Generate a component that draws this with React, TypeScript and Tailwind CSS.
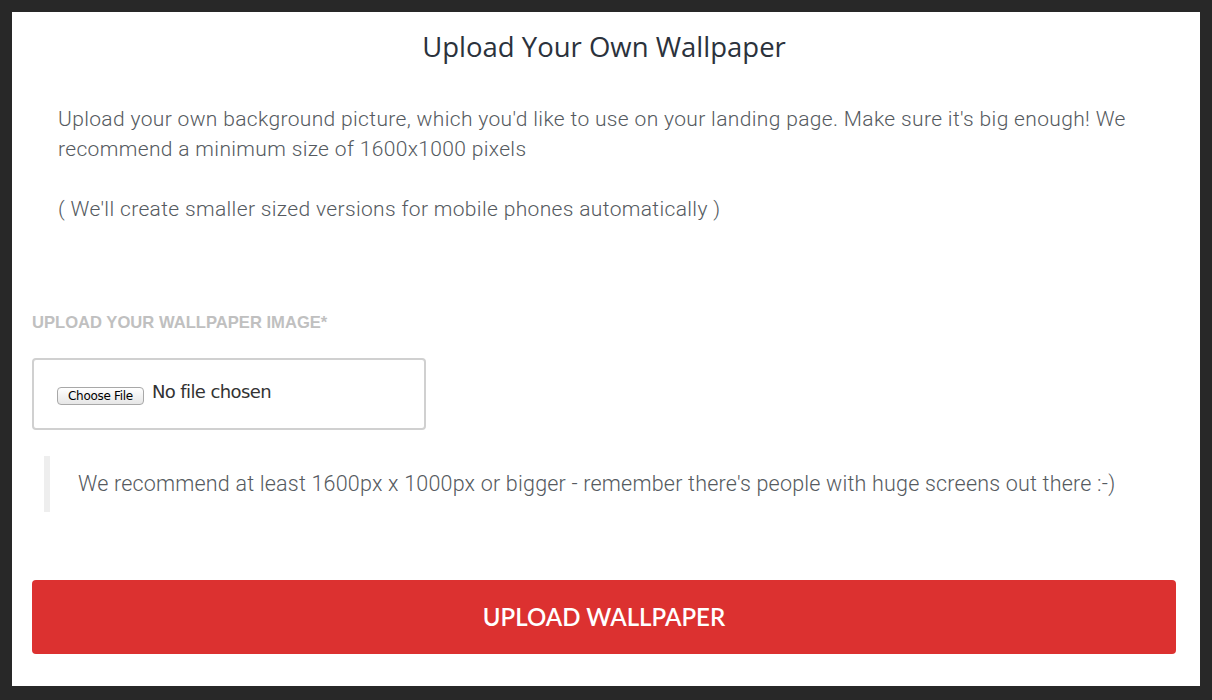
export default function App() {
  return (
    <div className="w-[1212px] h-[700px] bg-[#282828] pt-[12px] pl-[12px] pr-[12px] pb-[14px]">
      <div className="h-full bg-white pl-[20px] pr-[24px] flex flex-col">
        <h1 className="text-center text-[27.5px] leading-[36px] mt-[17px] text-[#2b323c] font-['Open_Sans',sans-serif]">
          Upload Your Own Wallpaper
        </h1>
        <div className="pl-[26px] mt-[39px] text-[21px] leading-[30px] text-[#555a60] font-['Roboto',sans-serif] font-light tracking-[0.35px]">
          <p>
            Upload your own background picture, which you'd like to use on your landing page. Make sure it's big enough! We recommend a minimum size of 1600x1000 pixels
          </p>
          <p className="mt-[30px]">( We'll create smaller sized versions for mobile phones automatically )</p>
        </div>
        <label className="mt-[89px] text-[16.6px] leading-[20px] font-bold text-[#c0c0c0] font-['Liberation_Sans',sans-serif]">
          UPLOAD YOUR WALLPAPER IMAGE*
        </label>
        <div className="mt-[25px] w-[394px] h-[72px] border-2 border-[#d0d0d0] rounded-[4px] flex items-center pl-[23px]">
          <span className="inline-flex items-center h-[18px] px-[10px] mt-[4px] text-[12px] text-black bg-gradient-to-b from-white to-[#e6e6e6] border border-[#a8a8a8] rounded-[4px] font-['DejaVu_Sans','Liberation_Sans',sans-serif] tracking-[-0.3px]">
            Choose File
          </span>
          <span className="ml-[8px] mb-[6px] text-[18px] text-[#333] font-['DejaVu_Sans',sans-serif] tracking-[-0.6px]">No file chosen</span>
        </div>
        <div className="mt-[26px] ml-[12px] border-l-[6px] border-[#eeeeee] h-[56px] flex items-center pl-[28px]">
          <span className="text-[21.5px] text-[#555a60] font-['Roboto',sans-serif] font-light tracking-[0.2px]">
            We recommend at least 1600px x 1000px or bigger - remember there's people with huge screens out there :-)
          </span>
        </div>
        <button className="mt-[68px] h-[74px] w-full bg-[#dc3130] rounded-[4px] text-white text-[24px] font-['Lato',sans-serif] font-semibold">
          UPLOAD WALLPAPER
        </button>
      </div>
    </div>
  );
}
